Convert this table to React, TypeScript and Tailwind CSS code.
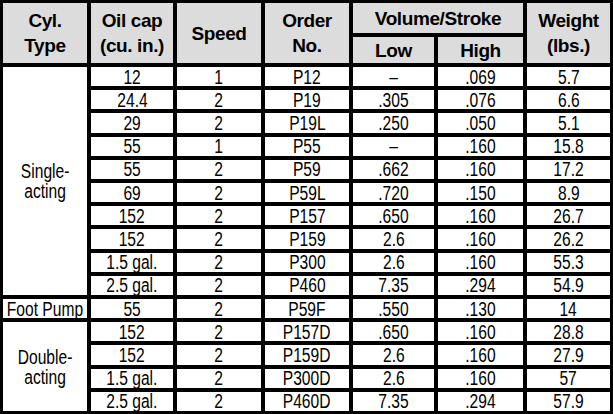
import React from "react";

type Row = [string, string, string, string, string, string];

const single: Row[] = [
  ["12", "1", "P12", "–", ".069", "5.7"],
  ["24.4", "2", "P19", ".305", ".076", "6.6"],
  ["29", "2", "P19L", ".250", ".050", "5.1"],
  ["55", "1", "P55", "–", ".160", "15.8"],
  ["55", "2", "P59", ".662", ".160", "17.2"],
  ["69", "2", "P59L", ".720", ".150", "8.9"],
  ["152", "2", "P157", ".650", ".160", "26.7"],
  ["152", "2", "P159", "2.6", ".160", "26.2"],
  ["1.5 gal.", "2", "P300", "2.6", ".160", "55.3"],
  ["2.5 gal.", "2", "P460", "7.35", ".294", "54.9"],
];

const foot: Row = ["55", "2", "P59F", ".550", ".130", "14"];

const double: Row[] = [
  ["152", "2", "P157D", ".650", ".160", "28.8"],
  ["152", "2", "P159D", "2.6", ".160", "27.9"],
  ["1.5 gal.", "2", "P300D", "2.6", ".160", "57"],
  ["2.5 gal.", "2", "P460D", "7.35", ".294", "57.9"],
];

const head =
  "flex items-center justify-center bg-[#dcdcdc] text-center font-['Liberation_Sans',Arial,sans-serif] text-[19px] font-bold leading-[25px] tracking-[-0.4px] text-black";
const cell =
  "flex min-h-0 items-center justify-center overflow-hidden whitespace-nowrap bg-white text-center font-['Liberation_Sans',Arial,sans-serif] text-[20px] leading-none text-black";

// Arial Narrow look: regular Liberation Sans squeezed horizontally
function Narrow({ children }: { children: React.ReactNode }) {
  return <span className="inline-block scale-x-[0.78]">{children}</span>;
}

function Cells({ row }: { row: Row }) {
  return (
    <>
      {row.map((v, i) => (
        <div key={i} className={cell}>
          <Narrow>{v}</Narrow>
        </div>
      ))}
    </>
  );
}

export default function App() {
  return (
    <div className="h-[414px] w-[613px] bg-black p-[3px]">
      <div className="grid h-full grid-cols-[84px_82px_84px_84px_81px_85px_83px] grid-rows-[30px_26px_repeat(15,minmax(0,1fr))] gap-x-[4px] gap-y-[4px]">
        {/* header */}
        <div className={`${head} row-span-2`}>
          Cyl.
          <br />
          Type
        </div>
        <div className={`${head} row-span-2`}>
          Oil cap
          <br />
          (cu. in.)
        </div>
        <div className={`${head} row-span-2`}>Speed</div>
        <div className={`${head} row-span-2`}>
          Order
          <br />
          No.
        </div>
        <div className={`${head} col-span-2`}>Volume/Stroke</div>
        <div className={`${head} row-span-2`}>
          Weight
          <br />
          (lbs.)
        </div>
        <div className={head}>Low</div>
        <div className={head}>High</div>

        {/* single-acting */}
        <div className={`${cell} row-span-10 leading-[21px]`}>
          <Narrow>
            Single-
            <br />
            acting
          </Narrow>
        </div>
        {single.map((r, i) => (
          <Cells key={i} row={r} />
        ))}

        {/* foot pump */}
        <div className={cell}>
          <Narrow>Foot Pump</Narrow>
        </div>
        <Cells row={foot} />

        {/* double-acting */}
        <div className={`${cell} row-span-4 leading-[21px]`}>
          <Narrow>
            Double-
            <br />
            acting
          </Narrow>
        </div>
        {double.map((r, i) => (
          <Cells key={i} row={r} />
        ))}
      </div>
    </div>
  );
}
